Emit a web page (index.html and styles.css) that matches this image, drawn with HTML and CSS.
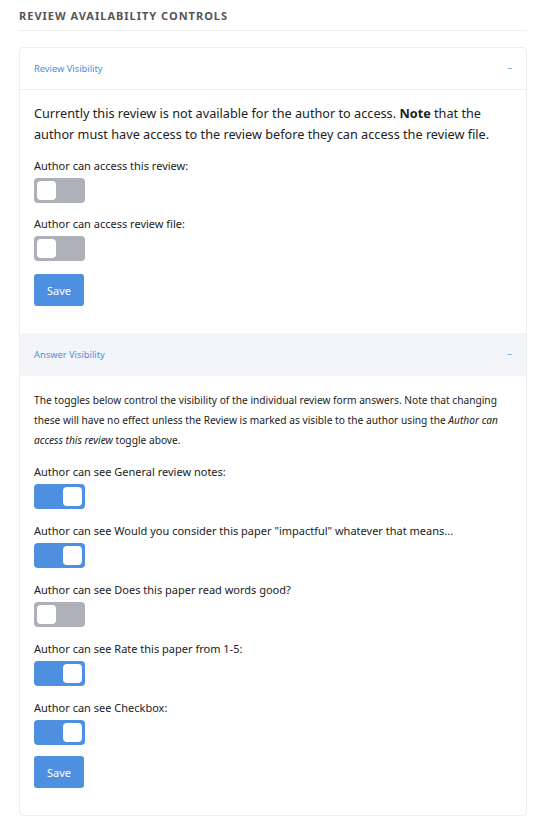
FILE: index.html
```html
<!DOCTYPE html>
<html>
<head>
<meta charset="utf-8">
<link rel="stylesheet" href="styles.css">
</head>
<body>
<div class="page">
  <h2 class="title">Review Availability Controls</h2>
  <div class="card">
    <div class="section-header">
      <span class="section-name">Review Visibility</span>
      <span class="collapse">−</span>
    </div>
    <div class="section-body">
      <p class="lead">Currently this review is not available for the author to access. <b>Note</b> that the author must have access to the review before they can access the review file.</p>
      <div class="field">
        <div class="label">Author can access this review:</div>
        <span class="toggle"><span class="knob"></span></span>
      </div>
      <div class="field">
        <div class="label">Author can access review file:</div>
        <span class="toggle"><span class="knob"></span></span>
      </div>
      <button class="btn">Save</button>
    </div>
    <div class="section-header shaded">
      <span class="section-name">Answer Visibility</span>
      <span class="collapse">−</span>
    </div>
    <div class="section-body second">
      <p class="note">The toggles below control the visibility of the individual review form answers. Note that changing these will have no effect unless the Review is marked as visible to the author using the <i>Author can access this review</i> toggle above.</p>
      <div class="field">
        <div class="label">Author can see General review notes:</div>
        <span class="toggle on"><span class="knob"></span></span>
      </div>
      <div class="field">
        <div class="label">Author can see Would you consider this paper "impactful" whatever that means...</div>
        <span class="toggle on"><span class="knob"></span></span>
      </div>
      <div class="field">
        <div class="label">Author can see Does this paper read words good?</div>
        <span class="toggle"><span class="knob"></span></span>
      </div>
      <div class="field">
        <div class="label">Author can see Rate this paper from 1-5:</div>
        <span class="toggle on"><span class="knob"></span></span>
      </div>
      <div class="field">
        <div class="label">Author can see Checkbox:</div>
        <span class="toggle on"><span class="knob"></span></span>
      </div>
      <button class="btn">Save</button>
    </div>
  </div>
</div>
</body>
</html>
```

FILE: styles.css
```css
* { box-sizing: border-box; }
body {
  margin: 0;
  background: #fff;
  font-family: "Noto Sans", "Open Sans", sans-serif;
  color: #222;
}
.page {
  padding: 0 19px;
}
.title {
  margin: 0;
  padding: 8px 0 6px;
  font-size: 11px;
  font-weight: 700;
  letter-spacing: 1px;
  text-transform: uppercase;
  color: #555;
  border-bottom: 1px solid #eee;
  line-height: 16px;
}
.card {
  margin-top: 16px;
  border: 1px solid #eee;
  border-radius: 4px;
}
.section-header {
  height: 42px;
  padding: 0 14px;
  display: flex;
  align-items: center;
  justify-content: space-between;
  border-bottom: 1px solid #eee;
}
.section-header.shaded {
  background: #f4f5f9;
  border-bottom: none;
  height: 43px;
}
.section-name {
  font-size: 9.3px;
  color: #4a8ee0;
}
.collapse {
  font-size: 9px;
  color: #4a8ee0;
}
.section-body {
  padding: 13px 14px 27px;
}
.section-body.second {
  padding-top: 14px;
}
.lead {
  margin: 0 0 13px;
  font-size: 12.7px;
  line-height: 21px;
}
.note {
  margin: 0 0 14px;
  font-size: 10.2px;
  line-height: 20px;
}
.field {
  margin-bottom: 13px;
}
.second .field {
  margin-bottom: 14px;
}
.second .field:last-of-type {
  margin-bottom: 11px;
}
.label {
  font-size: 11px;
  line-height: 16px;
  margin-bottom: 4px;
}
.toggle {
  display: flex;
  width: 51px;
  height: 25px;
  border-radius: 4px;
  background: #adb0b8;
  padding: 3px;
}
.toggle.on {
  background: #4f8fdf;
  justify-content: flex-end;
}
.knob {
  width: 19px;
  height: 19px;
  background: #fff;
  border-radius: 4px;
}
.btn {
  display: block;
  margin-top: 11px;
  width: 50px;
  height: 32px;
  border: none;
  border-radius: 3px;
  background: #4f8fdf;
  color: #fff;
  font-family: inherit;
  font-size: 11px;
  padding: 0;
}
```
